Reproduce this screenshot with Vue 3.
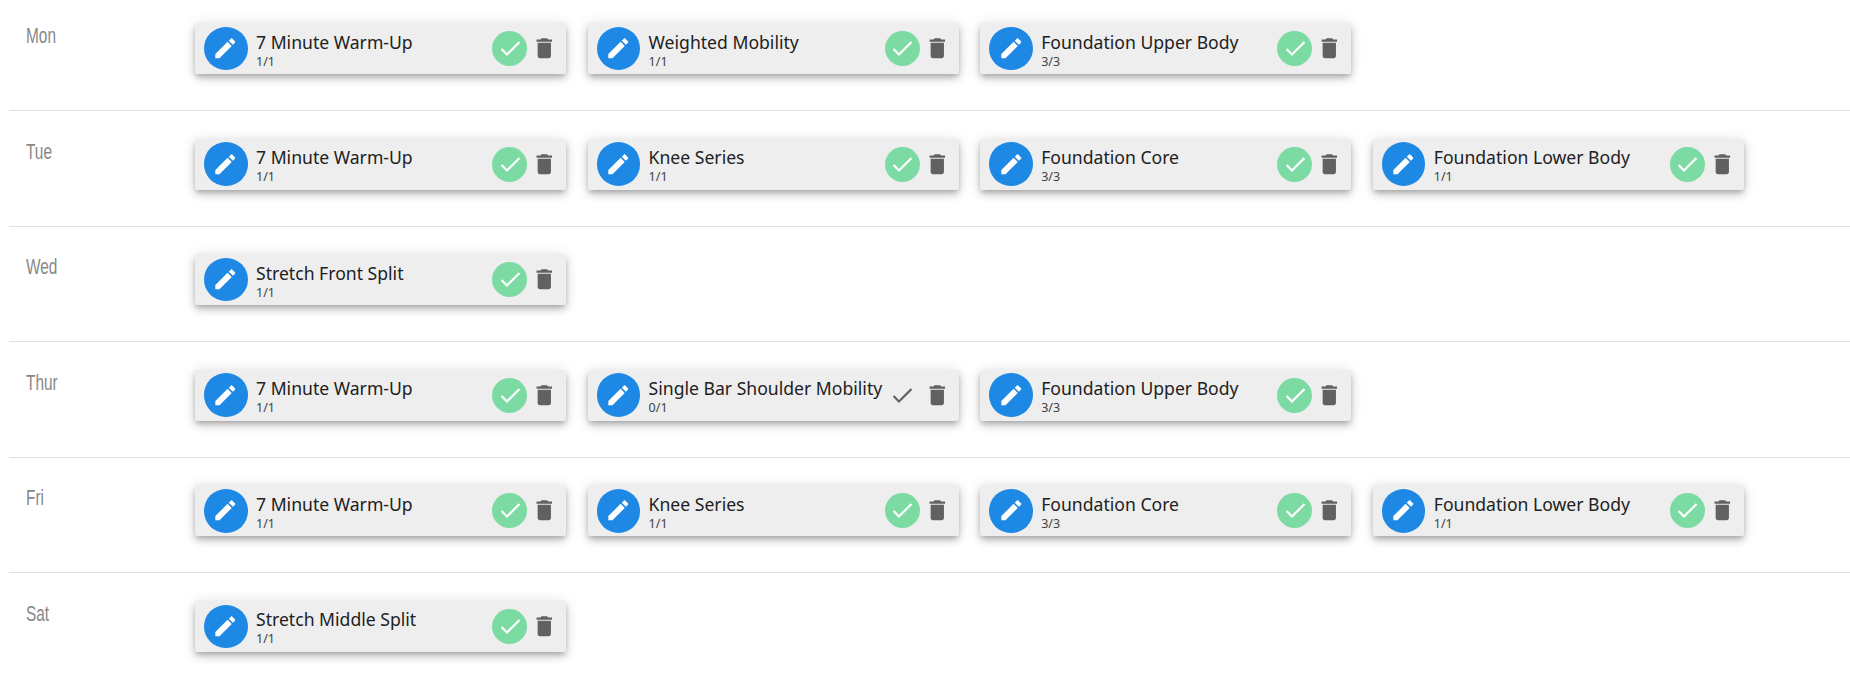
<template>
  <div class="schedule">
    <div v-for="day in days" :key="day.name" class="day">
      <div class="day-name"><span>{{ day.name }}</span></div>
      <div class="cards">
        <div v-for="(w, i) in day.workouts" :key="i" class="card">
          <button class="edit">
            <svg viewBox="0 0 24 24" width="26.6" height="26.6"><path fill="#fff" d="M3 17.25V21h3.75L17.81 9.94l-3.75-3.75L3 17.25zM20.71 7.04c.39-.39.39-1.02 0-1.41l-2.34-2.34c-.39-.39-1.02-.39-1.41 0l-1.83 1.83 3.75 3.75 1.83-1.83z"/></svg>
          </button>
          <div class="info">
            <div class="title">{{ w.title }}</div>
            <div class="count">{{ w.done }}/{{ w.total }}</div>
          </div>
          <div class="check" :class="{ complete: w.done === w.total }">
            <svg viewBox="0 0 24 24" width="26.6" height="26.6"><path :fill="w.done === w.total ? '#fff' : '#616161'" d="M9 16.17L4.83 12l-1.42 1.41L9 19 21 7l-1.41-1.41z"/></svg>
          </div>
          <svg class="trash" viewBox="0 0 24 24" width="26.6" height="26.6"><path fill="#616161" d="M6 19c0 1.1.9 2 2 2h8c1.1 0 2-.9 2-2V7H6v12zM19 4h-3.5l-1-1h-5l-1 1H5v2h14V4z"/></svg>
        </div>
      </div>
    </div>
  </div>
</template>

<script setup>
const warm = { title: '7 Minute Warm-Up', done: 1, total: 1 }
const upper = { title: 'Foundation Upper Body', done: 3, total: 3 }
const knee = { title: 'Knee Series', done: 1, total: 1 }
const core = { title: 'Foundation Core', done: 3, total: 3 }
const lower = { title: 'Foundation Lower Body', done: 1, total: 1 }

const days = [
  { name: 'Mon', workouts: [warm, { title: 'Weighted Mobility', done: 1, total: 1 }, upper] },
  { name: 'Tue', workouts: [warm, knee, core, lower] },
  { name: 'Wed', workouts: [{ title: 'Stretch Front Split', done: 1, total: 1 }] },
  { name: 'Thur', workouts: [warm, { title: 'Single Bar Shoulder Mobility', done: 0, total: 1 }, upper] },
  { name: 'Fri', workouts: [warm, knee, core, lower] },
  { name: 'Sat', workouts: [{ title: 'Stretch Middle Split', done: 1, total: 1 }] }
]
</script>

<style>
html, body {
  background: #fff;
}
</style>

<style scoped>
.schedule {
  padding-left: 9px;
  font-family: "Noto Sans", "Open Sans", sans-serif;
}
.day {
  display: flex;
  box-sizing: border-box;
  height: 115.6px;
  padding-top: 27.5px;
  border-bottom: 1px solid #e0e0e0;
}
.day:first-child {
  height: 111px;
  padding-top: 23px;
}
.day:last-child {
  border-bottom: none;
}
.day-name {
  width: 186px;
  padding-left: 17px;
  box-sizing: border-box;
  font-family: "Liberation Sans", sans-serif;
  font-size: 22px;
  line-height: 25px;
  color: #878787;
}
.day-name span {
  display: inline-block;
  transform: scaleX(0.7);
  transform-origin: left center;
}
.cards {
  display: flex;
  gap: 21.6px;
}
.card {
  display: flex;
  align-items: center;
  width: 371px;
  height: 51px;
  box-sizing: border-box;
  padding: 0 9px;
  background: #eeeeee;
  border-radius: 2px;
  box-shadow: 0 3px 5px -1px rgba(0, 0, 0, 0.2), 0 5px 8px rgba(0, 0, 0, 0.14), 0 1px 14px rgba(0, 0, 0, 0.12);
}
.edit {
  flex: none;
  width: 43.5px;
  height: 43.5px;
  border: none;
  border-radius: 50%;
  padding: 0;
  background: #1e88e5;
  display: flex;
  align-items: center;
  justify-content: center;
}
.info {
  flex: 1;
  min-width: 0;
  margin-left: 8.5px;
  padding-top: 3px;
  white-space: nowrap;
}
.title {
  font-size: 17.6px;
  line-height: 22px;
  color: #212121;
}
.count {
  font-size: 12.5px;
  line-height: 17px;
  color: #424242;
}
.check {
  flex: none;
  width: 35px;
  height: 35px;
  border-radius: 50%;
  display: flex;
  align-items: center;
  justify-content: center;
}
.check.complete {
  background: #7bdba3;
}
.trash {
  flex: none;
  margin-left: 3.8px;
  margin-right: -0.7px;
}
</style>
